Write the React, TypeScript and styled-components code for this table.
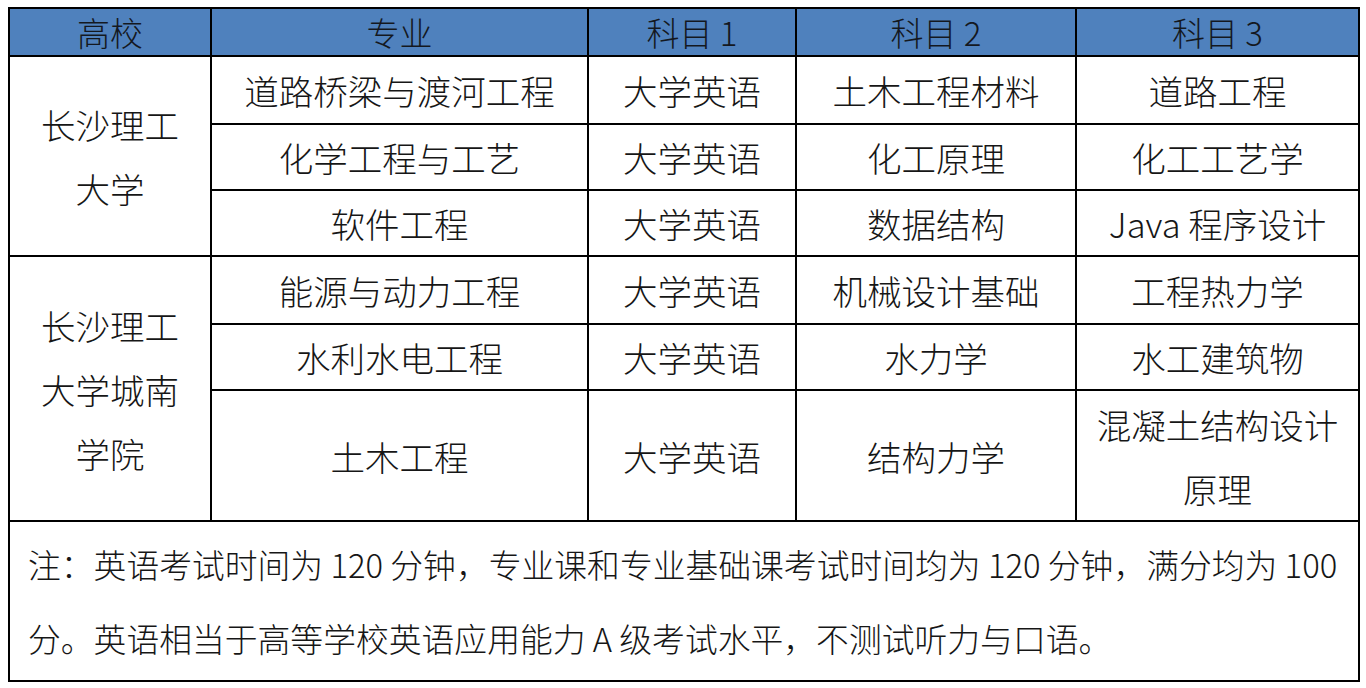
import React from "react";
import styled, { createGlobalStyle } from "styled-components";

const GlobalStyle = createGlobalStyle`
  html, body {
    margin: 0;
    padding: 0;
    background: #ffffff;
  }
  body {
    font-family: "Noto Sans CJK SC", "Noto Sans", sans-serif;
    color: #161616;
  }
`;

const Page = styled.div`
  padding: 7px 9px 0 8px;
`;

const Table = styled.table`
  width: 1350px;
  border-collapse: collapse;
  table-layout: fixed;
  border: 2px solid #000;
  font-size: 34.5px;
  font-weight: 300;
`;

const HeadCell = styled.th`
  background: #4f81bd;
  border: 2px solid #000;
  height: 46px;
  padding: 0;
  font-weight: 300;
  font-size: 33px;
  color: #14181f;
  text-align: center;
  line-height: 44px;
`;

const Row = styled.tr<{ $h: number }>`
  height: ${({ $h }) => $h}px;
`;

const Cell = styled.td`
  border: 2px solid #000;
  padding: 0;
  text-align: center;
  vertical-align: middle;
  line-height: 64px;
`;

const NoteCell = styled.td`
  border: 2px solid #000;
  padding: 5px 0 5px 18px;
  text-align: left;
  line-height: 74px;
  font-size: 32.8px;
  white-space: nowrap;
`;

type Course = { major: string; s1: string; s2: string; s3: React.ReactNode; h: number };

const groups: { school: React.ReactNode; rows: Course[] }[] = [
  {
    school: (
      <>
        长沙理工
        <br />
        大学
      </>
    ),
    rows: [
      { major: "道路桥梁与渡河工程", s1: "大学英语", s2: "土木工程材料", s3: "道路工程", h: 68 },
      { major: "化学工程与工艺", s1: "大学英语", s2: "化工原理", s3: "化工工艺学", h: 66 },
      { major: "软件工程", s1: "大学英语", s2: "数据结构", s3: "Java 程序设计", h: 66 },
    ],
  },
  {
    school: (
      <>
        长沙理工
        <br />
        大学城南
        <br />
        学院
      </>
    ),
    rows: [
      { major: "能源与动力工程", s1: "大学英语", s2: "机械设计基础", s3: "工程热力学", h: 68 },
      { major: "水利水电工程", s1: "大学英语", s2: "水力学", s3: "水工建筑物", h: 66 },
      {
        major: "土木工程",
        s1: "大学英语",
        s2: "结构力学",
        s3: (
          <>
            混凝土结构设计
            <br />
            原理
          </>
        ),
        h: 131,
      },
    ],
  },
];

const headers = ["高校", "专业", "科目 1", "科目 2", "科目 3"];
const widths = [202, 377, 208, 280, 283];

export default function App(): React.ReactElement {
  return (
    <Page>
      <GlobalStyle />
      <Table>
        <colgroup>
          {widths.map((w, i) => (
            <col key={i} style={{ width: w }} />
          ))}
        </colgroup>
        <thead>
          <tr>
            {headers.map((h) => (
              <HeadCell key={h}>{h}</HeadCell>
            ))}
          </tr>
        </thead>
        <tbody>
          {groups.map((g, gi) =>
            g.rows.map((r, ri) => (
              <Row key={`${gi}-${ri}`} $h={r.h}>
                {ri === 0 && <Cell rowSpan={g.rows.length}>{g.school}</Cell>}
                <Cell>{r.major}</Cell>
                <Cell>{r.s1}</Cell>
                <Cell>{r.s2}</Cell>
                <Cell>{r.s3}</Cell>
              </Row>
            ))
          )}
          <tr>
            <NoteCell colSpan={5}>
              注：英语考试时间为 120 分钟，专业课和专业基础课考试时间均为 120 分钟，满分均为 100
              <br />
              分。英语相当于高等学校英语应用能力 A 级考试水平，不测试听力与口语。
            </NoteCell>
          </tr>
        </tbody>
      </Table>
    </Page>
  );
}
